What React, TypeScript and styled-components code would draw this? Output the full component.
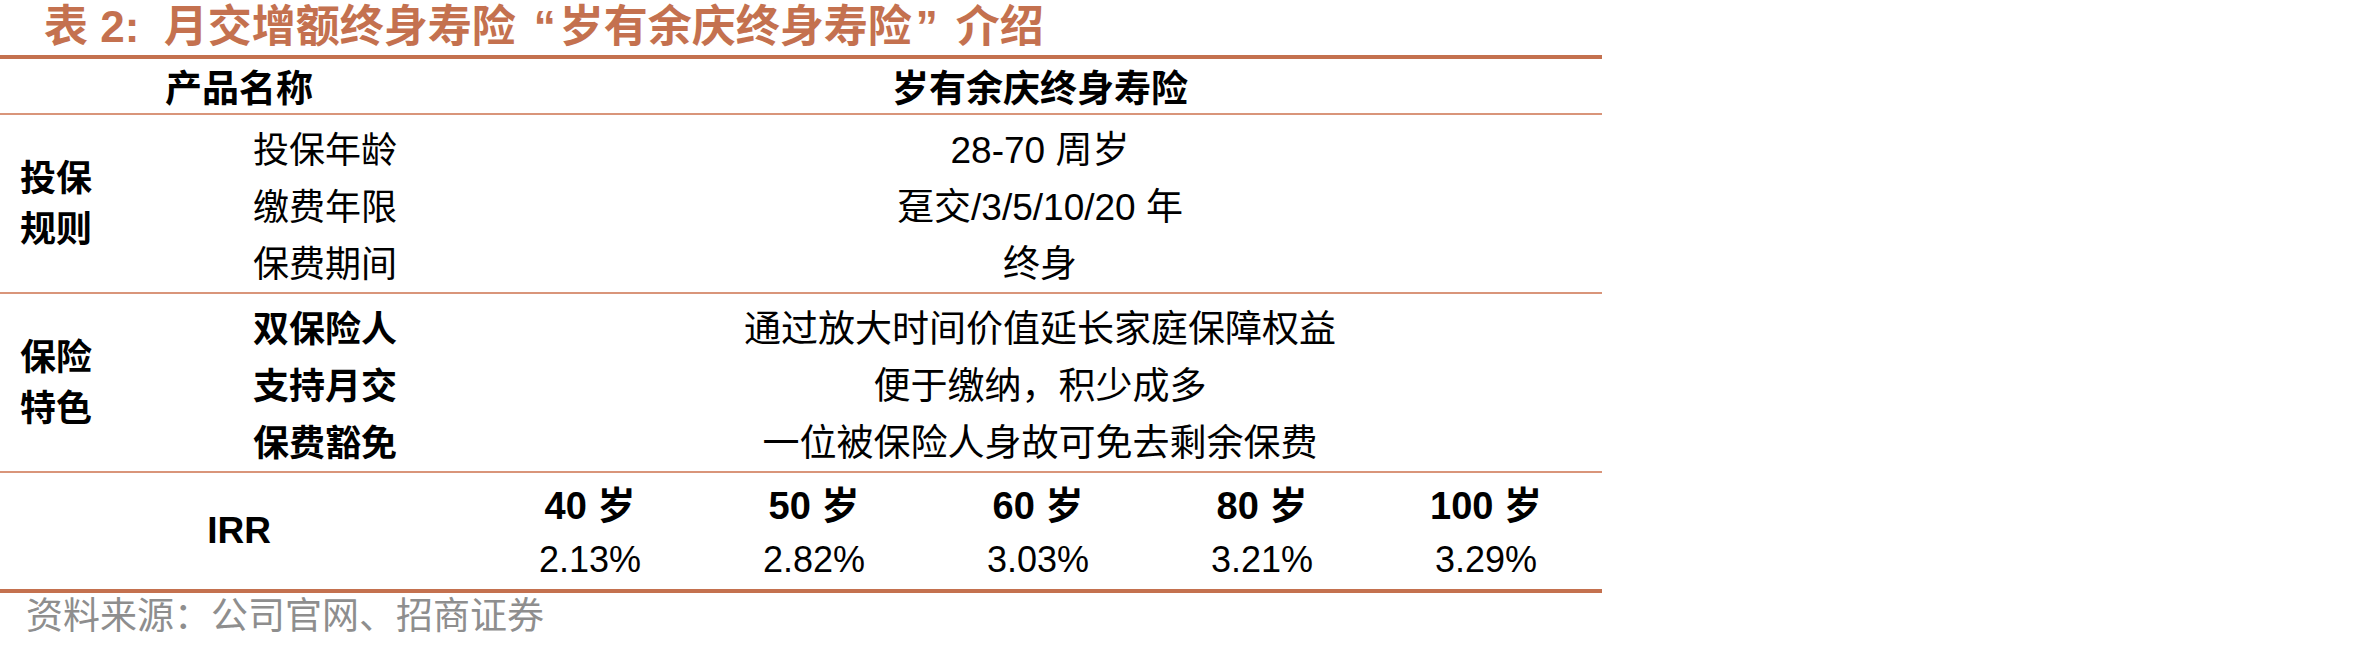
import React from 'react';
import styled, { createGlobalStyle } from 'styled-components';

const accent = '#c4714f';
const thinLine = '#d9957a';

const GlobalStyle = createGlobalStyle`
  html, body {
    margin: 0;
    padding: 0;
    background: #ffffff;
  }
  body {
    font-family: "Liberation Sans", "Noto Sans CJK SC", sans-serif;
    color: #000000;
  }
`;

const Page = styled.div`
  width: 1602px;
`;

const Caption = styled.h1`
  margin: 0;
  height: 55px;
  padding-left: 44px;
  font-size: 44px;
  line-height: 54px;
  font-weight: 700;
  color: ${accent};
  white-space: nowrap;
`;

// full-width Chinese quote marks, drawn with the latin glyph in a 1em box
const Quote = styled.span<{ $open?: boolean }>`
  display: inline-block;
  width: 1em;
  text-align: ${({ $open }) => ($open ? 'right' : 'left')};
  padding: ${({ $open }) => ($open ? '0 4px 0 0' : '0 0 0 4px')};
  box-sizing: border-box;
`;

const Table = styled.div`
  border-top: 4px solid ${accent};
  border-bottom: 4px solid ${accent};
`;

const HeaderRow = styled.div`
  display: grid;
  grid-template-columns: 478px 1fr;
  height: 54px;
  align-items: center;
  border-bottom: 2px solid ${thinLine};
  font-size: 37px;
  font-weight: 700;
`;

const Centered = styled.div`
  text-align: center;
`;

const Section = styled.div<{ $last?: boolean }>`
  display: grid;
  grid-template-columns: 253px 225px 1fr;
  grid-auto-rows: 57px;
  padding: 3px 0;
  align-items: center;
  border-bottom: ${({ $last }) => ($last ? 'none' : `2px solid ${thinLine}`)};
`;

const GroupLabel = styled.div`
  grid-row: 1 / span 3;
  padding-left: 20px;
  font-size: 36px;
  font-weight: 700;
  line-height: 51px;
`;

const ItemLabel = styled.div<{ $bold?: boolean }>`
  font-size: 36px;
  font-weight: ${({ $bold }) => ($bold ? 700 : 400)};
  white-space: nowrap;
`;

const Value = styled.div`
  font-size: 37px;
  text-align: center;
  white-space: nowrap;
`;

const IrrRow = styled.div`
  display: grid;
  grid-template-columns: 478px repeat(5, 224px);
  height: 116px;
  align-items: center;
`;

const IrrLabel = styled.div`
  font-size: 37px;
  font-weight: 700;
  text-align: center;
`;

const IrrCell = styled.div`
  display: grid;
  grid-template-rows: 58px 58px;
  align-items: center;
  text-align: center;
  font-size: 36px;
`;

const Age = styled.div`
  font-size: 38px;
  font-weight: 700;
`;

const Source = styled.div`
  padding: 4px 0 0 26px;
  font-size: 37px;
  line-height: 40px;
  color: #8e8e8e;
  white-space: nowrap;
`;

const rules = [
  { label: '投保年龄', value: '28-70 周岁' },
  { label: '缴费年限', value: '趸交/3/5/10/20 年' },
  { label: '保费期间', value: '终身' },
];

const features = [
  { label: '双保险人', value: '通过放大时间价值延长家庭保障权益' },
  { label: '支持月交', value: '便于缴纳，积少成多' },
  { label: '保费豁免', value: '一位被保险人身故可免去剩余保费' },
];

const irr = [
  { age: '40 岁', rate: '2.13%' },
  { age: '50 岁', rate: '2.82%' },
  { age: '60 岁', rate: '3.03%' },
  { age: '80 岁', rate: '3.21%' },
  { age: '100 岁', rate: '3.29%' },
];

const App = () => {
  return (
    <Page>
      <GlobalStyle />
      <Caption>
        表 2:&nbsp;&nbsp;月交增额终身寿险<Quote $open>“</Quote>岁有余庆终身寿险<Quote>”</Quote>介绍
      </Caption>
      <Table>
        <HeaderRow>
          <Centered>产品名称</Centered>
          <Centered>岁有余庆终身寿险</Centered>
        </HeaderRow>

        <Section>
          <GroupLabel>
            投保
            <br />
            规则
          </GroupLabel>
          {rules.map((row) => (
            <React.Fragment key={row.label}>
              <ItemLabel>{row.label}</ItemLabel>
              <Value>{row.value}</Value>
            </React.Fragment>
          ))}
        </Section>

        <Section>
          <GroupLabel>
            保险
            <br />
            特色
          </GroupLabel>
          {features.map((row) => (
            <React.Fragment key={row.label}>
              <ItemLabel $bold>{row.label}</ItemLabel>
              <Value>{row.value}</Value>
            </React.Fragment>
          ))}
        </Section>

        <IrrRow>
          <IrrLabel>IRR</IrrLabel>
          {irr.map((col) => (
            <IrrCell key={col.age}>
              <Age>{col.age}</Age>
              <div>{col.rate}</div>
            </IrrCell>
          ))}
        </IrrRow>
      </Table>
      <Source>资料来源：公司官网、招商证券</Source>
    </Page>
  );
};

export default App;
